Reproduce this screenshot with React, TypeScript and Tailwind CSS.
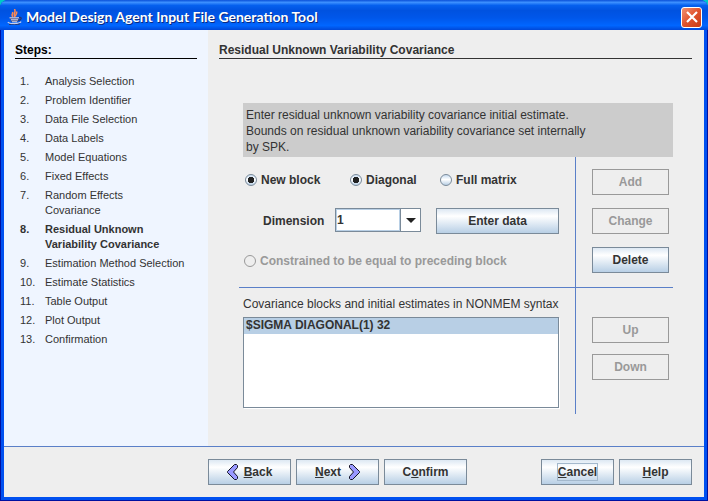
import type { ButtonHTMLAttributes, InputHTMLAttributes, ReactNode } from 'react';

const steps: string[][] = [
  ['Analysis Selection'],
  ['Problem Identifier'],
  ['Data File Selection'],
  ['Data Labels'],
  ['Model Equations'],
  ['Fixed Effects'],
  ['Random Effects', 'Covariance'],
  ['Residual Unknown', 'Variability Covariance'],
  ['Estimation Method Selection'],
  ['Estimate Statistics'],
  ['Table Output'],
  ['Plot Output'],
  ['Confirmation'],
];
const currentStep = 8;

function MetalButton({ className = '', ...rest }: ButtonHTMLAttributes<HTMLButtonElement>) {
  return (
    <button
      type="button"
      className={`flex h-[26px] items-center justify-center border border-[#7a8a99] bg-linear-to-b from-[#dde8f3] via-white via-30% to-[#b8cfe5] text-[12px] leading-4 font-bold text-[#333333] disabled:border-[#999999] disabled:bg-none disabled:text-[#999999] ${className}`}
      {...rest}
    />
  );
}

function MetalRadio({
  children,
  className = '',
  ...rest
}: InputHTMLAttributes<HTMLInputElement> & { children: ReactNode }) {
  return (
    <label
      className={`flex items-center gap-1 text-[12px] leading-4 font-bold whitespace-nowrap text-[#333333] has-disabled:text-[#999999] ${className}`}
    >
      <input
        type="radio"
        className="size-3 shrink-0 appearance-none rounded-full border border-[#7a8a99] bg-[linear-gradient(#c8dcf0,#ffffff_45%,#b8cfe5)] checked:bg-[radial-gradient(circle,#222222_3px,transparent_3.5px),linear-gradient(#c8dcf0,#ffffff_45%,#b8cfe5)] disabled:border-[#999999] disabled:bg-none"
        {...rest}
      />
      {children}
    </label>
  );
}

function JavaCup() {
  return (
    <svg viewBox="0 0 16 16" className="size-4 shrink-0" fill="none" aria-hidden="true">
      <path d="M6 8C3.500 5.500 6.500 5 5.500 3M8 8C5.500 4.500 9.500 4 7.500 0M8.500 7.500C8 5.500 10.500 5 9.500 2.500" stroke="#ff8a50" strokeWidth="1.500" />
      <path d="M2.500 8.500H12l-1.500 4.500h-6z" fill="#4a5488" />
      <path d="M2.500 8.800H12M4 10.800h7M5 12.800h5" stroke="#d8dcf0" strokeWidth="1" />
      <path d="M12 8.500c3.200-.8 3 2.200-.8 3" stroke="#2a3468" strokeWidth="1.300" />
      <path d="M.8 13c1.500 2.200 11 2.200 13.400-.3" stroke="#c9cfe6" strokeWidth="1.200" />
      <path d="M2 15.300c3 .9 8.500 .7 11-.5" stroke="#2a3468" strokeWidth="1" />
    </svg>
  );
}

function Arrow({ back = false }: { back?: boolean }) {
  return (
    <svg
      viewBox="0 0 11 16"
      className={`h-4 w-[11px] ${back ? 'rotate-180' : ''}`}
      aria-hidden="true"
    >
      <path
        d="M1.500 .5h2L10.500 7.500v1L3.500 15.500h-2l-1-1v-2L4.500 8 .5 3.500v-2z"
        fill="#9999ff"
        stroke="#111122"
        strokeWidth="1"
      />
    </svg>
  );
}

export default function App() {
  return (
    <div className="flex min-h-screen flex-col bg-[#00c8c8] font-['Liberation_Sans',Arial,sans-serif] text-[#333333]">
      <div className="flex flex-1 flex-col overflow-hidden rounded-t-lg bg-[#0831d9]">
        <header className="flex h-[30px] items-center bg-[linear-gradient(#0a50d8,#3c90ff_8%,#0560ee_18%,#0052e0_35%,#0057ea_60%,#0066ff_85%,#0048d8)] pt-1 pr-[6px] pl-[7px]">
          <JavaCup />
          <h1 className="ml-[3px] flex-1 font-['Lato',sans-serif] text-[14px] leading-4 font-bold whitespace-nowrap text-white [text-shadow:1px_1px_#0a2a80]">
            Model Design Agent Input File Generation Tool
          </h1>
          <button
            type="button"
            aria-label="Close"
            className="flex size-[21px] items-center justify-center rounded-[3px] border border-white bg-linear-to-br from-[#f09070] via-[#e0522c] to-[#c83c14]"
          >
            <svg viewBox="0 0 12 12" className="size-3" aria-hidden="true">
              <path d="M1 1l10 10M11 1L1 11" stroke="white" strokeWidth="2.200" />
            </svg>
          </button>
        </header>

        <div className="flex flex-1 flex-col border-x border-b border-[#0010a0] bg-[#0050f0] px-[3px] pb-[3px]">
          <div className="flex flex-1 flex-col bg-[#eeeeee]">
            <div className="flex flex-1">
              <nav aria-label="Steps" className="w-[204px] shrink-0 bg-[#eff5ff] px-[11px] pt-3">
                <h2 className="border-b border-black text-[12px] leading-4 font-bold text-black">
                  Steps:
                </h2>
                <ol className="mt-[15px] flex flex-col gap-1 pl-[5px] text-[11px] leading-[15px]">
                  {steps.map((lines, i) => (
                    <li
                      key={lines[0]}
                      aria-current={i + 1 === currentStep ? 'step' : undefined}
                      className={`flex whitespace-nowrap ${i + 1 === currentStep ? 'font-bold' : ''}`}
                    >
                      <span className="w-[25px] shrink-0">{i + 1}.</span>
                      <span>
                        {lines.map((line) => (
                          <span key={line} className="block">
                            {line}
                          </span>
                        ))}
                      </span>
                    </li>
                  ))}
                </ol>
              </nav>

              <main className="flex-1 pt-3 pr-3 pl-[11px] pb-8">
                <h2 className="border-b border-[#333333] text-[12px] leading-4 font-bold">
                  Residual Unknown Variability Covariance
                </h2>

                <div className="mt-11 mr-[19px] ml-5">
                  <p className="ml-1 h-[54px] bg-[#cccccc] px-[3px] pt-1 text-[12px] leading-4">
                    Enter residual unknown variability covariance initial estimate.
                    <br />
                    Bounds on residual unknown variability covariance set internally
                    <br />
                    by SPK.
                  </p>

                  <div className="flex border-b border-[#5a7fc8]">
                    <form className="h-[130px] flex-1 border-r border-[#5a7fc8] pt-[15px]">
                      <div className="flex pl-[6px]">
                        <MetalRadio name="source" defaultChecked className="w-[105px]">
                          New block
                        </MetalRadio>
                        <MetalRadio name="shape" defaultChecked className="w-[90px]">
                          Diagonal
                        </MetalRadio>
                        <MetalRadio name="shape">Full matrix</MetalRadio>
                      </div>
                      <div className="mt-5 flex pr-4 pl-6">
                        <label htmlFor="dimension" className="mt-[5px] w-[72px] text-[12px] leading-4 font-bold">
                          Dimension
                        </label>
                        <div className="grid h-6 w-[86px] grid-cols-[1fr_20px] border border-[#7a8a99] bg-white">
                          <select
                            id="dimension"
                            className="col-span-2 col-start-1 row-start-1 appearance-none bg-transparent pl-px text-[12px] leading-4 font-bold"
                          >
                            <option>1</option>
                            <option>2</option>
                            <option>3</option>
                          </select>
                          <span className="pointer-events-none col-start-1 row-start-1 border border-[#b8cfe5]" />
                          <span className="pointer-events-none col-start-2 row-start-1 flex items-center justify-center border-l border-[#7a8a99]">
                            <svg viewBox="0 0 10 5" className="h-[5px] w-[10px]" aria-hidden="true">
                              <path d="M0 0h10L5 5z" fill="#222222" />
                            </svg>
                          </span>
                        </div>
                        <MetalButton className="ml-[15px] flex-1">Enter data</MetalButton>
                      </div>
                      <MetalRadio name="source" disabled className="mt-[19px] pl-[5px]">
                        Constrained to be equal to preceding block
                      </MetalRadio>
                    </form>
                    <div className="flex w-[97px] flex-col gap-[13px] pt-3 pr-1 pl-4">
                      <MetalButton disabled>Add</MetalButton>
                      <MetalButton disabled>Change</MetalButton>
                      <MetalButton>Delete</MetalButton>
                    </div>
                  </div>

                  <div className="flex">
                    <div className="h-[126px] flex-1 border-r border-[#5a7fc8] pt-2 pr-4 pl-1">
                      <label htmlFor="blocks" className="block text-[12px] leading-4 whitespace-nowrap">
                        Covariance blocks and initial estimates in NONMEM syntax
                      </label>
                      <select
                        id="blocks"
                        size={5}
                        defaultValue="sigma"
                        className="mt-[5px] block h-[91px] w-full overflow-hidden border border-[#7a8a99] bg-white text-[12px] font-bold shadow-[1px_1px_white]"
                      >
                        <option
                          value="sigma"
                          className="h-4 min-h-4 bg-[linear-gradient(#b8cfe5,#b8cfe5)] p-0 pl-0.5 leading-4 font-bold text-[#333333]"
                        >
                          $SIGMA DIAGONAL(1) 32
                        </option>
                      </select>
                    </div>
                    <div className="flex w-[97px] flex-col gap-[11px] pt-[29px] pr-1 pl-4">
                      <MetalButton disabled>Up</MetalButton>
                      <MetalButton disabled>Down</MetalButton>
                    </div>
                  </div>
                </div>
              </main>
            </div>

            <footer className="flex gap-[5px] border-t border-[#5a7fc8] py-3 pr-3 pl-[204px]">
              <MetalButton className="w-[83px] gap-[6px]">
                <Arrow back />
                <span>
                  <u>B</u>ack
                </span>
              </MetalButton>
              <MetalButton className="w-[83px] gap-2">
                <span>
                  <u>N</u>ext
                </span>
                <Arrow />
              </MetalButton>
              <MetalButton className="w-[83px]">
                <span>
                  C<u>o</u>nfirm
                </span>
              </MetalButton>
              <MetalButton className="ml-auto w-[73px]">
                <span className="outline outline-[#a3b8cc]">
                  <u>C</u>ancel
                </span>
              </MetalButton>
              <MetalButton className="w-[73px]">
                <span>
                  <u>H</u>elp
                </span>
              </MetalButton>
            </footer>
          </div>
        </div>
      </div>
    </div>
  );
}
